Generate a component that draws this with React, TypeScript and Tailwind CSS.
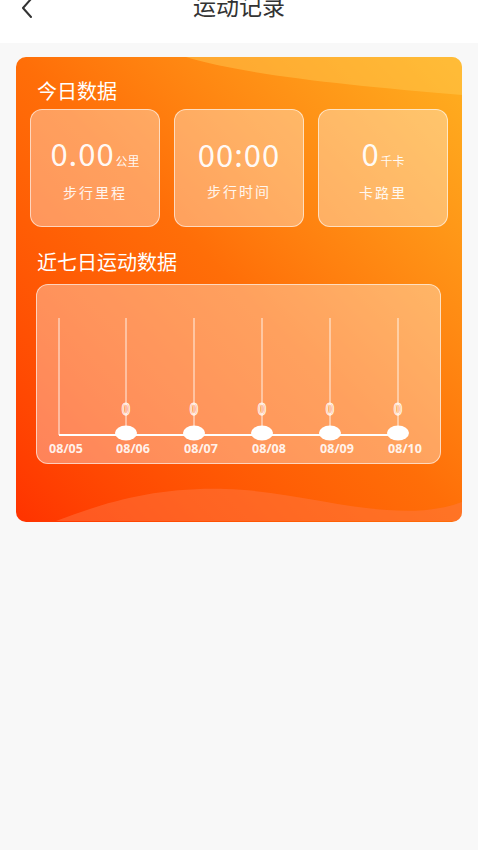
import React from 'react'

const font = { fontFamily: '"Noto Sans CJK SC", "Noto Sans", sans-serif' }

const today = [
  { value: '0.00', unit: '公里', label: '步行里程' },
  { value: '00:00', unit: '', label: '步行时间' },
  { value: '0', unit: '千卡', label: '卡路里' },
]

const days = ['08/05', '08/06', '08/07', '08/08', '08/09', '08/10']

const StatBox = ({ value, unit, label }: { value: string; unit: string; label: string }) => (
  <div className="flex h-[118px] flex-col items-center justify-center rounded-[12px] border border-white/60 bg-white/35 pt-[4px]">
    <div className="flex items-baseline text-white/95">
      <span className="text-[31px] leading-none tracking-[1px]">{value}</span>
      {unit && <span className="ml-[1px] text-[12px]">{unit}</span>}
    </div>
    <div className="mt-[12px] text-[14px] tracking-[2px] text-white/90">{label}</div>
  </div>
)

const Chart = () => {
  const xs = [22, 89, 157, 225, 293, 361]
  return (
    <svg width="405" height="178" viewBox="0 0 405 178" className="block">
      {xs.map((x, i) => (
        <line key={'v' + i} x1={x} y1={33} x2={x} y2={150} stroke="white" strokeOpacity="0.85" strokeWidth="1" />
      ))}
      <line x1={22} y1={150} x2={361} y2={150} stroke="white" strokeWidth="2" />
      {xs.slice(1).map((x, i) => (
        <g key={'p' + i}>
          <text x={x} y={130} textAnchor="middle" fontSize="16" fill="none" stroke="white" strokeOpacity="0.9" strokeWidth="0.9" style={font}>
            0
          </text>
          <ellipse cx={x} cy={148} rx={11} ry={7.5} fill="white" />
        </g>
      ))}
      {xs.map((x, i) => (
        <text key={'d' + i} x={x + 7} y={168} textAnchor="middle" fontSize="12.5" fontWeight="700" fill="white" fillOpacity="0.9" style={{ fontFamily: '"Open Sans", sans-serif' }}>
          {days[i]}
        </text>
      ))}
    </svg>
  )
}

export default function App() {
  return (
    <div className="min-h-[850px] w-[478px] bg-[#f8f8f8]" style={font}>
      <div className="flex h-[43px] flex-col bg-white">
        <div className="relative -mt-[13px] flex h-[36px] items-center justify-center">
          <svg className="absolute left-[20px] top-[10px]" width="14" height="22" viewBox="0 0 14 22">
            <path d="M11 2 L3 11 L11 20" fill="none" stroke="#333" strokeWidth="2" strokeLinecap="round" strokeLinejoin="round" />
          </svg>
          <span className="text-[23px] text-[#333]">运动记录</span>
        </div>
      </div>

      <div className="px-[16px] pt-[14px]">
        <div className="relative overflow-hidden rounded-[10px] bg-gradient-to-tr from-[#ff3200] via-[#ff6e08] to-[#ffb020]">
          <svg className="absolute inset-0" width="446" height="464" viewBox="0 0 446 464" preserveAspectRatio="none">
            <path d="M170 0 C 230 18, 330 28, 446 38 L 446 0 Z" fill="#ffcc55" fillOpacity="0.45" />
            <path d="M40 464 C 90 445, 140 430, 210 432 C 290 434, 380 470, 446 445 L 446 464 Z" fill="#ff7a4a" fillOpacity="0.45" />
          </svg>
          <div className="relative px-[14px] pb-[58px] pt-[22px]">
            <div className="pl-[7px] text-[20px] leading-[24px] text-white">今日数据</div>
            <div className="mt-[6px] grid grid-cols-3 gap-[14px]">
              {today.map((t) => (
                <StatBox key={t.label} {...t} />
              ))}
            </div>
            <div className="mt-[23px] pl-[7px] text-[20px] leading-[24px] text-white">近七日运动数据</div>
            <div className="ml-[6px] mt-[10px] w-[405px] rounded-[12px] border border-white/60 bg-white/35">
              <Chart />
            </div>
          </div>
        </div>
      </div>
    </div>
  )
}
